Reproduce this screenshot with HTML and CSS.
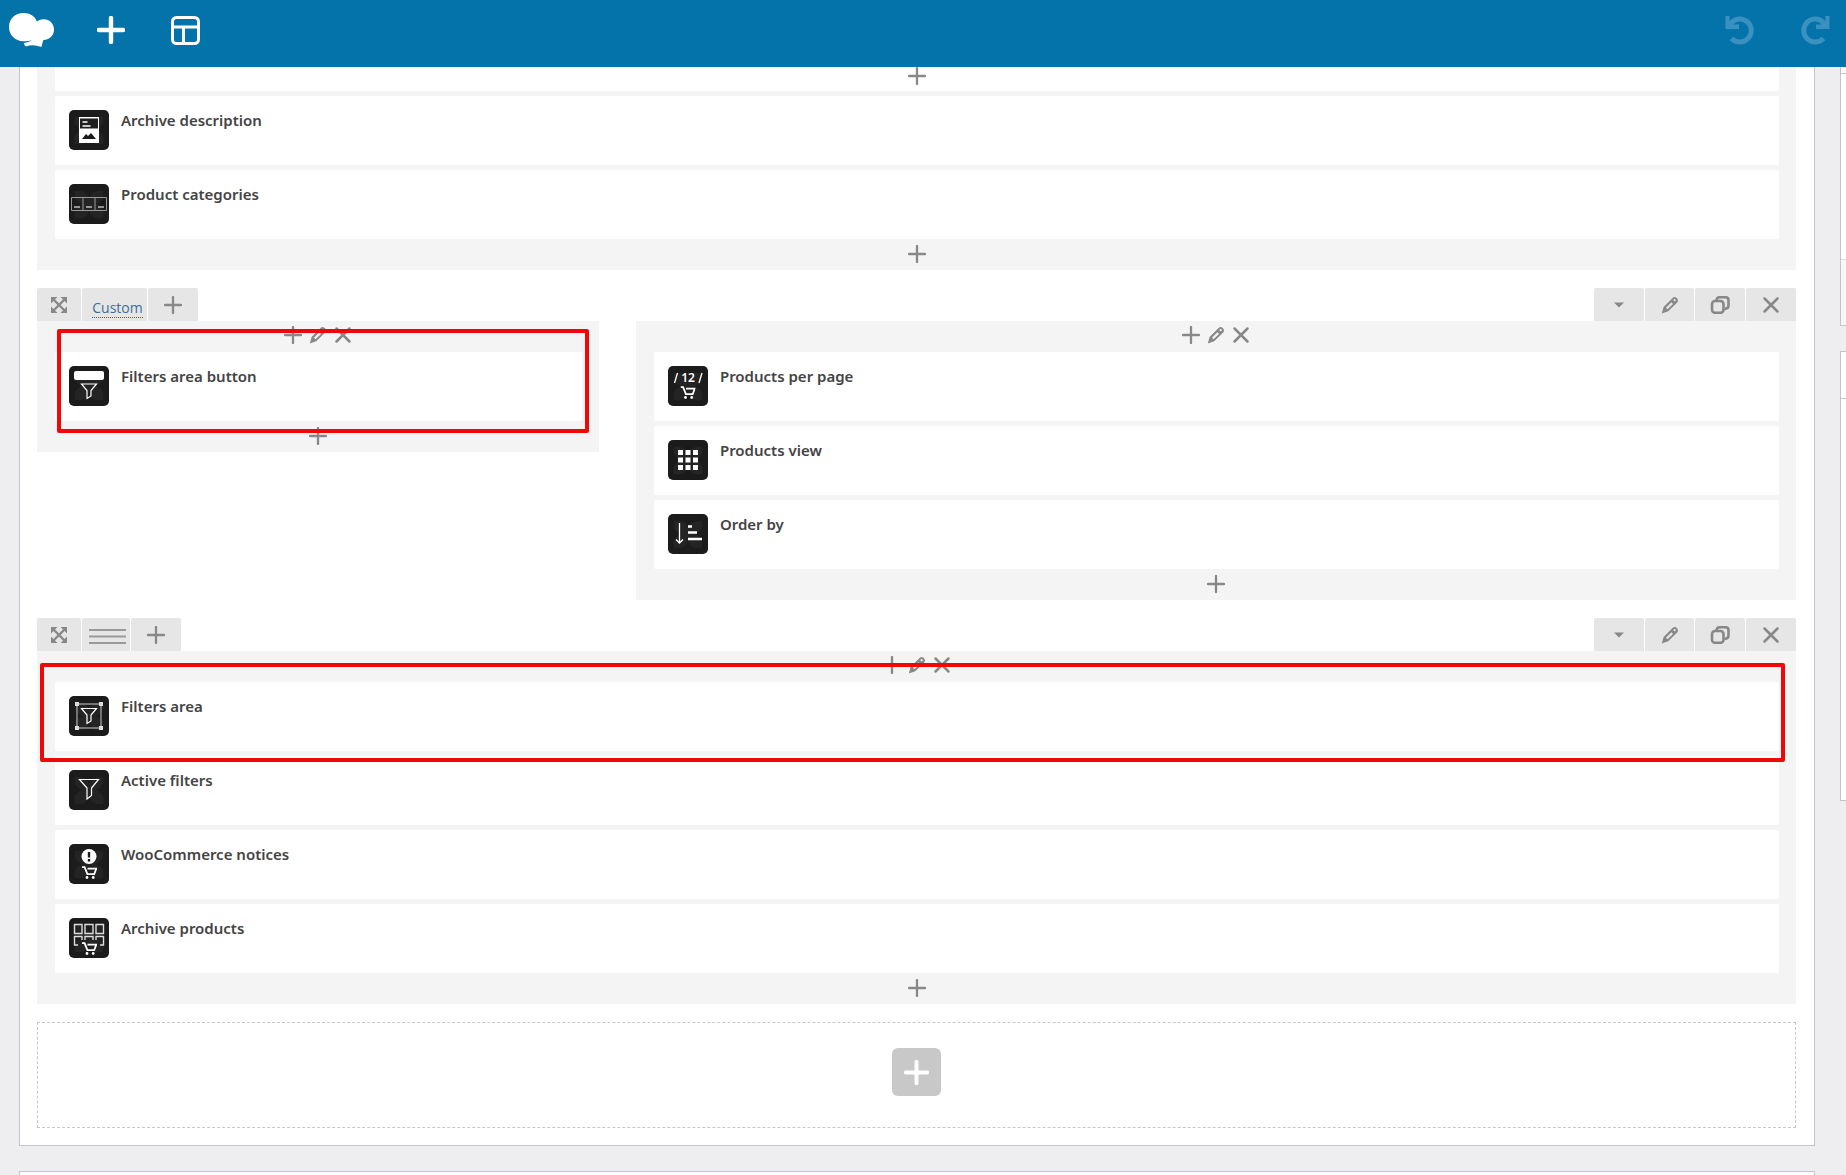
FILE: index.html
```html
<!DOCTYPE html>
<html lang="en">
  <head>
    <meta charset="UTF-8" />
    <meta name="viewport" content="width=device-width, initial-scale=1.0" />
    <title>Layout Builder</title>
    <link rel="stylesheet" href="styles.css">
  </head>
  <body>
    <!-- shared icons -->
    <svg class="sprite" aria-hidden="true">
      <symbol id="plus" viewBox="0 0 18 18">
        <path d="M9 1v16M1 9h16" fill="none" stroke="currentColor" stroke-width="2.3" stroke-linecap="round" />
      </symbol>
      <symbol id="plus-bold" viewBox="0 0 28 28">
        <path d="M14 2v24M2 14h24" fill="none" stroke="currentColor" stroke-width="4.4" stroke-linecap="round" />
      </symbol>
      <symbol id="pencil" viewBox="0 0 18 18">
        <path fill-rule="evenodd" fill="currentColor" d="M.8 17.4 2.6 11 11.8 1.8Q13.2.5 14.8 1.3Q16.6 2.4 17 4Q17.2 5.4 16.2 6.4L7.2 15.3ZM5 11.800 6.500 13.300 12 7.900 10.400 6.300ZM13.6 3.100A1.100 1.100 0 1 0 13.700 5.300A1.100 1.100 0 1 0 13.600 3.100Z" />
      </symbol>
      <symbol id="close" viewBox="0 0 18 18">
        <path d="M2.5 2.5l13 13M15.5 2.5l-13 13" fill="none" stroke="currentColor" stroke-width="2.5" stroke-linecap="round" />
      </symbol>
      <symbol id="copy" viewBox="0 0 20 18">
        <g fill="none" stroke="currentColor" stroke-width="2.6">
          <rect x="2" y="5" width="11.5" height="11.8" rx="3" />
          <path d="M6.5 4.5Q6.8 1.3 9.5 1.3H15.500Q18.500 1.300 18.500 4.200V9.800Q18.500 12.700 14.500 13" />
        </g>
      </symbol>
      <symbol id="caret" viewBox="0 0 10 6">
        <path d="M0 .5h10L5 5.500z" fill="currentColor" />
      </symbol>
      <symbol id="expand" viewBox="0 0 18 18">
        <path d="M3 3l12 12M15 3L3 15" stroke="currentColor" stroke-width="2.4" />
        <path d="M1 1h6.500L1 7.500zM17 1v6.500L10.500 1zM17 17h-6.500L17 10.500zM1 17v-6.500L7.500 17z" fill="currentColor" />
      </symbol>
      <symbol id="undo" viewBox="0 0 30 30">
        <path d="M6.500 23.500A11.500 11.500 0 1 0 6 8" fill="none" stroke="currentColor" stroke-width="5" />
        <path d="M.5 1h4v5.500L8.500 9.500H14V14H.5z" fill="currentColor" />
      </symbol>
      <symbol id="cart" viewBox="0 0 15 13">
        <path d="M0 1.200h2.600l2.800 7h6.800l2-5.500H5.500" fill="none" stroke="#fff" stroke-width="1.800" />
        <circle cx="5" cy="11.500" r="1.400" fill="#fff" />
        <circle cx="11.200" cy="11.500" r="1.400" fill="#fff" />
      </symbol>
      <symbol id="tile" viewBox="0 0 40 40">
        <rect width="40" height="40" rx="5" fill="#1b1b1b" />
        <path d="M6 7Q17 5 20 14Q23 5 34 7Q36 17 27 20Q37 24 34 34Q23 36 20 27Q17 36 6 34Q3 24 13 20Q4 17 6 7z" fill="#242424" />
      </symbol>
    </svg>

    <header class="topbar">
      <div class="topbar-group">
        <button class="topbar-btn topbar-logo" type="button" aria-label="Builder">
          <svg width="46" height="34" viewBox="0 0 46 34">
            <path fill="#fff" d="M14.500 0C21 0 26 3 27.800 8.500Q30 6.500 34 6.300C40.500 6 45 10.500 45 16.500C45 22 41 26.800 34.500 27Q33 30 32.600 34Q24 31 17 33.400Q15 32.200 14.800 30Q20 29.600 23 27.300Q19 28.500 14.500 28.300C6 28 0 22 0 14C0 6 6 0 14.500 0z" />
          </svg>
        </button>
        <button class="topbar-btn" type="button" aria-label="Add element">
          <svg width="28" height="28"><use href="#plus-bold" /></svg>
        </button>
        <button class="topbar-btn" type="button" aria-label="Templates">
          <svg width="29" height="29" viewBox="0 0 29 29" fill="none" stroke="currentColor" stroke-width="3">
            <rect x="1.500" y="1.500" width="26" height="26" rx="4" />
            <path d="M1.500 11h26M12.500 11v16.500" />
          </svg>
        </button>
      </div>
      <div class="topbar-group history">
        <button class="topbar-btn" type="button" aria-label="Undo">
          <svg width="30" height="30"><use href="#undo" /></svg>
        </button>
        <button class="topbar-btn" type="button" aria-label="Redo">
          <svg class="flip" width="30" height="30"><use href="#undo" /></svg>
        </button>
      </div>
    </header>

    <div class="workspace">
      <main class="main">
        <div class="panel builder">
          <section class="row">
            <div class="column">
              <div class="element nested">
                <button class="icon-btn" type="button" aria-label="Add"><svg><use href="#plus" /></svg></button>
              </div>
              <div class="element">
                <svg class="tile" viewBox="0 0 40 40">
                  <use href="#tile" />
                  <rect x="10" y="7" width="20" height="26" fill="#fff" />
                  <rect x="11" y="8.500" width="18" height="10" fill="#1f1f1f" />
                  <path d="M13.500 12h5M13.500 16h8" stroke="#fff" stroke-width="1.300" />
                  <path d="M13 29l4-5 2 2 3-3 5 6z" fill="#1b1b1b" />
                </svg>
                <span class="element-name">Archive description</span>
              </div>
              <div class="element">
                <svg class="tile" viewBox="0 0 40 40">
                  <use href="#tile" />
                  <path d="M2.500 13.500h35v13h-35zM14 13.500v13M26 13.500v13" fill="none" stroke="#999" />
                  <path d="M5 23h6M17 23h6M29 23h6" stroke="#bbb" stroke-width="1.500" />
                </svg>
                <span class="element-name">Product categories</span>
              </div>
              <div class="column-foot">
                <button class="icon-btn" type="button" aria-label="Add"><svg><use href="#plus" /></svg></button>
              </div>
            </div>
          </section>

          <section class="row">
            <div class="row-controls">
              <div class="tabs">
                <button class="tab tab-move" type="button" aria-label="Move row"><svg><use href="#expand" /></svg></button>
                <div class="tab tab-layout"><a href="#">Custom</a></div>
                <button class="tab" type="button" aria-label="Add column"><svg><use href="#plus" /></svg></button>
              </div>
              <div class="tabs">
                <button class="tab" type="button" aria-label="Toggle row"><svg class="caret"><use href="#caret" /></svg></button>
                <button class="tab tab-edit" type="button" aria-label="Edit row"><svg><use href="#pencil" /></svg></button>
                <button class="tab" type="button" aria-label="Clone row"><svg class="copy"><use href="#copy" /></svg></button>
                <button class="tab" type="button" aria-label="Delete row"><svg><use href="#close" /></svg></button>
              </div>
            </div>
            <div class="columns">
              <div class="column">
                <div class="column-head">
                  <button class="icon-btn" type="button" aria-label="Add"><svg><use href="#plus" /></svg></button>
                  <button class="icon-btn" type="button" aria-label="Edit"><svg><use href="#pencil" /></svg></button>
                  <button class="icon-btn" type="button" aria-label="Delete"><svg><use href="#close" /></svg></button>
                </div>
                <div class="element">
                  <svg class="tile" viewBox="0 0 40 40">
                    <use href="#tile" />
                    <rect x="5" y="5" width="30" height="9" rx="2" fill="#fff" />
                    <path d="M12.500 18h15L22 24.500v5.500l-4 2.500v-8z" fill="none" stroke="#fff" stroke-width="1.200" />
                  </svg>
                  <span class="element-name">Filters area button</span>
                </div>
                <div class="column-foot">
                  <button class="icon-btn" type="button" aria-label="Add"><svg><use href="#plus" /></svg></button>
                </div>
                <div class="highlight highlight-button"></div>
              </div>
              <div class="column">
                <div class="column-head">
                  <button class="icon-btn" type="button" aria-label="Add"><svg><use href="#plus" /></svg></button>
                  <button class="icon-btn" type="button" aria-label="Edit"><svg><use href="#pencil" /></svg></button>
                  <button class="icon-btn" type="button" aria-label="Delete"><svg><use href="#close" /></svg></button>
                </div>
                <div class="element">
                  <svg class="tile" viewBox="0 0 40 40">
                    <use href="#tile" />
                    <text class="tile-text" x="20" y="16">12</text>
                    <path d="M9.500 7L6.500 17M34 7l-3 10" stroke="#fff" stroke-width="1.300" />
                    <use href="#cart" x="12.500" y="20" width="15" height="13" />
                  </svg>
                  <span class="element-name">Products per page</span>
                </div>
                <div class="element">
                  <svg class="tile" viewBox="0 0 40 40">
                    <use href="#tile" />
                    <path d="M10 12.500h20M10 20h20M10 27.500h20" stroke="#fff" stroke-width="5" stroke-dasharray="5 2.500" />
                  </svg>
                  <span class="element-name">Products view</span>
                </div>
                <div class="element">
                  <svg class="tile" viewBox="0 0 40 40">
                    <use href="#tile" />
                    <path d="M11.500 9v20M8 25.500l3.500 3.500 3.500-3.500" fill="none" stroke="#fff" stroke-width="1.300" />
                    <path d="M20 12.500h4M20 18.500h9M20 25h14" stroke="#fff" stroke-width="2.500" />
                  </svg>
                  <span class="element-name">Order by</span>
                </div>
                <div class="column-foot">
                  <button class="icon-btn" type="button" aria-label="Add"><svg><use href="#plus" /></svg></button>
                </div>
              </div>
            </div>
          </section>

          <section class="row">
            <div class="row-controls">
              <div class="tabs">
                <button class="tab tab-move" type="button" aria-label="Move row"><svg><use href="#expand" /></svg></button>
                <button class="tab tab-lines" type="button" aria-label="Row layout">
                  <svg class="lines" viewBox="0 0 37 16"><path d="M0 1h37M0 7.500h37M0 14h37" stroke="#999" stroke-width="2" /></svg>
                </button>
                <button class="tab" type="button" aria-label="Add column"><svg><use href="#plus" /></svg></button>
              </div>
              <div class="tabs">
                <button class="tab" type="button" aria-label="Toggle row"><svg class="caret"><use href="#caret" /></svg></button>
                <button class="tab tab-edit" type="button" aria-label="Edit row"><svg><use href="#pencil" /></svg></button>
                <button class="tab" type="button" aria-label="Clone row"><svg class="copy"><use href="#copy" /></svg></button>
                <button class="tab" type="button" aria-label="Delete row"><svg><use href="#close" /></svg></button>
              </div>
            </div>
            <div class="column">
              <div class="column-head">
                <button class="icon-btn" type="button" aria-label="Add"><svg><use href="#plus" /></svg></button>
                <button class="icon-btn" type="button" aria-label="Edit"><svg><use href="#pencil" /></svg></button>
                <button class="icon-btn" type="button" aria-label="Delete"><svg><use href="#close" /></svg></button>
              </div>
              <div class="element">
                <svg class="tile" viewBox="0 0 40 40">
                  <use href="#tile" />
                  <rect x="8" y="8" width="24" height="24" fill="none" stroke="#ccc" />
                  <path d="M6 6h4v4H6zM30 6h4v4h-4zM6 30h4v4H6zM30 30h4v4h-4z" fill="#ddd" />
                  <path d="M12.500 12.500h15L22 19v6l-4 2.500V19z" fill="none" stroke="#fff" stroke-width="1.200" />
                </svg>
                <span class="element-name">Filters area</span>
              </div>
              <div class="element">
                <svg class="tile" viewBox="0 0 40 40">
                  <use href="#tile" />
                  <path d="M10.500 9.500h19L22.500 18v7.500L18 29V18z" fill="none" stroke="#fff" stroke-width="1.200" />
                </svg>
                <span class="element-name">Active filters</span>
              </div>
              <div class="element">
                <svg class="tile" viewBox="0 0 40 40">
                  <use href="#tile" />
                  <circle cx="20" cy="12.500" r="7.500" fill="#fff" />
                  <path d="M20 8v5.500M20 15v2.500" stroke="#1b1b1b" stroke-width="2.400" />
                  <use href="#cart" x="13" y="22" width="15" height="13" />
                </svg>
                <span class="element-name">WooCommerce notices</span>
              </div>
              <div class="element">
                <svg class="tile" viewBox="0 0 40 40">
                  <use href="#tile" />
                  <g fill="none" stroke="#ddd" stroke-width="1.400">
                    <path d="M5.500 6.500h7.500v9H5.500zM16 6.500h8v9h-8zM27 6.500h7.500v9H27z" />
                    <path d="M9 27H5.500v-8.500H13V22M16 22v-3.500h8V22M27 22v-3.500h7.500V27H31" />
                  </g>
                  <use href="#cart" x="13" y="24" width="15" height="13" />
                </svg>
                <span class="element-name">Archive products</span>
              </div>
              <div class="column-foot">
                <button class="icon-btn" type="button" aria-label="Add"><svg><use href="#plus" /></svg></button>
              </div>
              <div class="highlight highlight-area"></div>
            </div>
          </section>

          <div class="add-row">
            <button class="add-row-btn" type="button" aria-label="Add element">
              <svg width="25" height="25"><use href="#plus-bold" /></svg>
            </button>
          </div>
        </div>
        <div class="panel panel-next"></div>
      </main>

      <aside class="sidebar">
        <div class="panel publish">
          <div class="publish-body"></div>
          <div class="publish-foot"></div>
        </div>
        <div class="panel attributes">
          <div class="attributes-head"></div>
        </div>
      </aside>
    </div>
  </body>
</html>
```
FILE: styles.css
```css
* {
  box-sizing: border-box;
}
body {
  margin: 0;
  height: 100vh;
  display: flex;
  flex-direction: column;
  overflow: hidden;
  background-color: #eeeef0;
  color: #444;
  font-family: "Noto Sans", "Open Sans", sans-serif;
}
button {
  padding: 0;
  border: none;
  background: none;
  color: inherit;
  cursor: pointer;
}
svg {
  display: block;
}
.sprite {
  position: absolute;
  width: 0;
  height: 0;
}

/* top bar */
.topbar {
  flex: none;
  display: flex;
  justify-content: space-between;
  height: 67px;
  padding-bottom: 7px;
  background-color: #0473aa;
  color: #fff;
}
.topbar-group {
  display: flex;
  gap: 12px;
}
.topbar-btn {
  display: flex;
  align-items: center;
  justify-content: center;
  width: 63px;
}
.topbar-logo {
  justify-content: flex-start;
  width: 67px;
  padding-left: 9px;
}
.history {
  color: #3a91c0;
}
.flip {
  transform: scaleX(-1);
}

/* page */
.workspace {
  flex: 1;
  display: flex;
  gap: 25px;
  min-height: 0;
  padding-left: 19px;
  overflow: hidden;
}
.main {
  flex: 1;
}
.panel {
  margin-bottom: 25px;
  border: 1px solid #c3c4c7;
  background-color: #fff;
}
.builder {
  display: flex;
  flex-direction: column;
  gap: 18px;
  padding: 0 18px 17px 17px;
  border-top: none;
}
.panel-next {
  height: 60px;
}

/* rows and columns */
.row-controls {
  display: flex;
  justify-content: space-between;
}
.tabs {
  display: flex;
  gap: 1px;
  color: #888;
}
.tab {
  display: flex;
  align-items: center;
  justify-content: center;
  width: 50px;
  height: 33px;
  border-radius: 2px 2px 0 0;
  background-color: #e6e6e6;
}
.tab svg,
.icon-btn svg {
  width: 18px;
  height: 18px;
}
.tab-move {
  width: 44px;
}
.tab-edit {
  width: 49px;
}
.tab-layout {
  width: 65px;
  padding: 8px 0 0 6px;
}
.tab-layout a {
  border-bottom: 1px dotted #0473aa;
  color: #3b7196;
  font-family: "Open Sans", sans-serif;
  font-size: 14px;
  line-height: 18px;
  text-decoration: none;
}
.tab-lines {
  width: 48px;
  padding: 4px 0 0 2px;
}
.tab .lines {
  width: 37px;
  height: 16px;
}
.tab .caret {
  width: 10px;
  height: 6px;
}
.tab .copy {
  width: 20px;
}
.columns {
  display: grid;
  grid-template-columns: 31fr 64fr;
  align-items: start;
  gap: 37px;
}
.column {
  position: relative;
  padding: 0 17px 0 18px;
  background-color: #f4f4f4;
}
.column-head,
.column-foot {
  display: flex;
  align-items: center;
  justify-content: center;
  gap: 7px;
  height: 31px;
  color: #888;
}
.column-head {
  padding-bottom: 3px;
}
.column-foot {
  padding-bottom: 2px;
}
.icon-btn {
  width: 18px;
  height: 18px;
}
.element {
  display: flex;
  gap: 12px;
  height: 69px;
  padding: 14px;
  border-radius: 2px;
  background-color: #fff;
}
.element + .element {
  margin-top: 5px;
}
.nested {
  align-items: flex-start;
  justify-content: center;
  height: 24px;
  padding: 0;
  color: #888;
}
.tile {
  flex: none;
  width: 40px;
  height: 40px;
}
.tile-text {
  fill: #fff;
  font-size: 12px;
  font-weight: 600;
  text-anchor: middle;
}
.element-name {
  font-size: 15px;
  font-weight: 600;
  line-height: 20px;
}

/* callouts drawn over the columns */
.highlight {
  position: absolute;
  border: 4px solid #f00808;
  border-radius: 2px;
  pointer-events: none;
}
.highlight-button {
  inset: 8px 10px 19px 20px;
}
.highlight-area {
  top: 12px;
  left: 3px;
  right: 11px;
  height: 99px;
}

.add-row {
  display: flex;
  align-items: flex-start;
  justify-content: center;
  height: 106px;
  padding-top: 25px;
  border: 1px dashed #c8c8c8;
}
.add-row-btn {
  display: flex;
  align-items: center;
  justify-content: center;
  width: 49px;
  height: 48px;
  border-radius: 6px;
  background-color: #c8c8c8;
  color: #fff;
}

/* sidebar runs off the right edge */
.sidebar {
  flex: 0 0 280px;
  margin-right: -274px;
}
.publish {
  padding-top: 6px;
  border-top: none;
}
.publish-body {
  height: 186px;
  border-top: 1px solid #c3c4c7;
}
.publish-foot {
  height: 66px;
  border-top: 1px solid #dcdcde;
  background-color: #f6f7f7;
}
.attributes {
  height: 450px;
}
.attributes-head {
  height: 47px;
  border-bottom: 1px solid #c3c4c7;
}
```
